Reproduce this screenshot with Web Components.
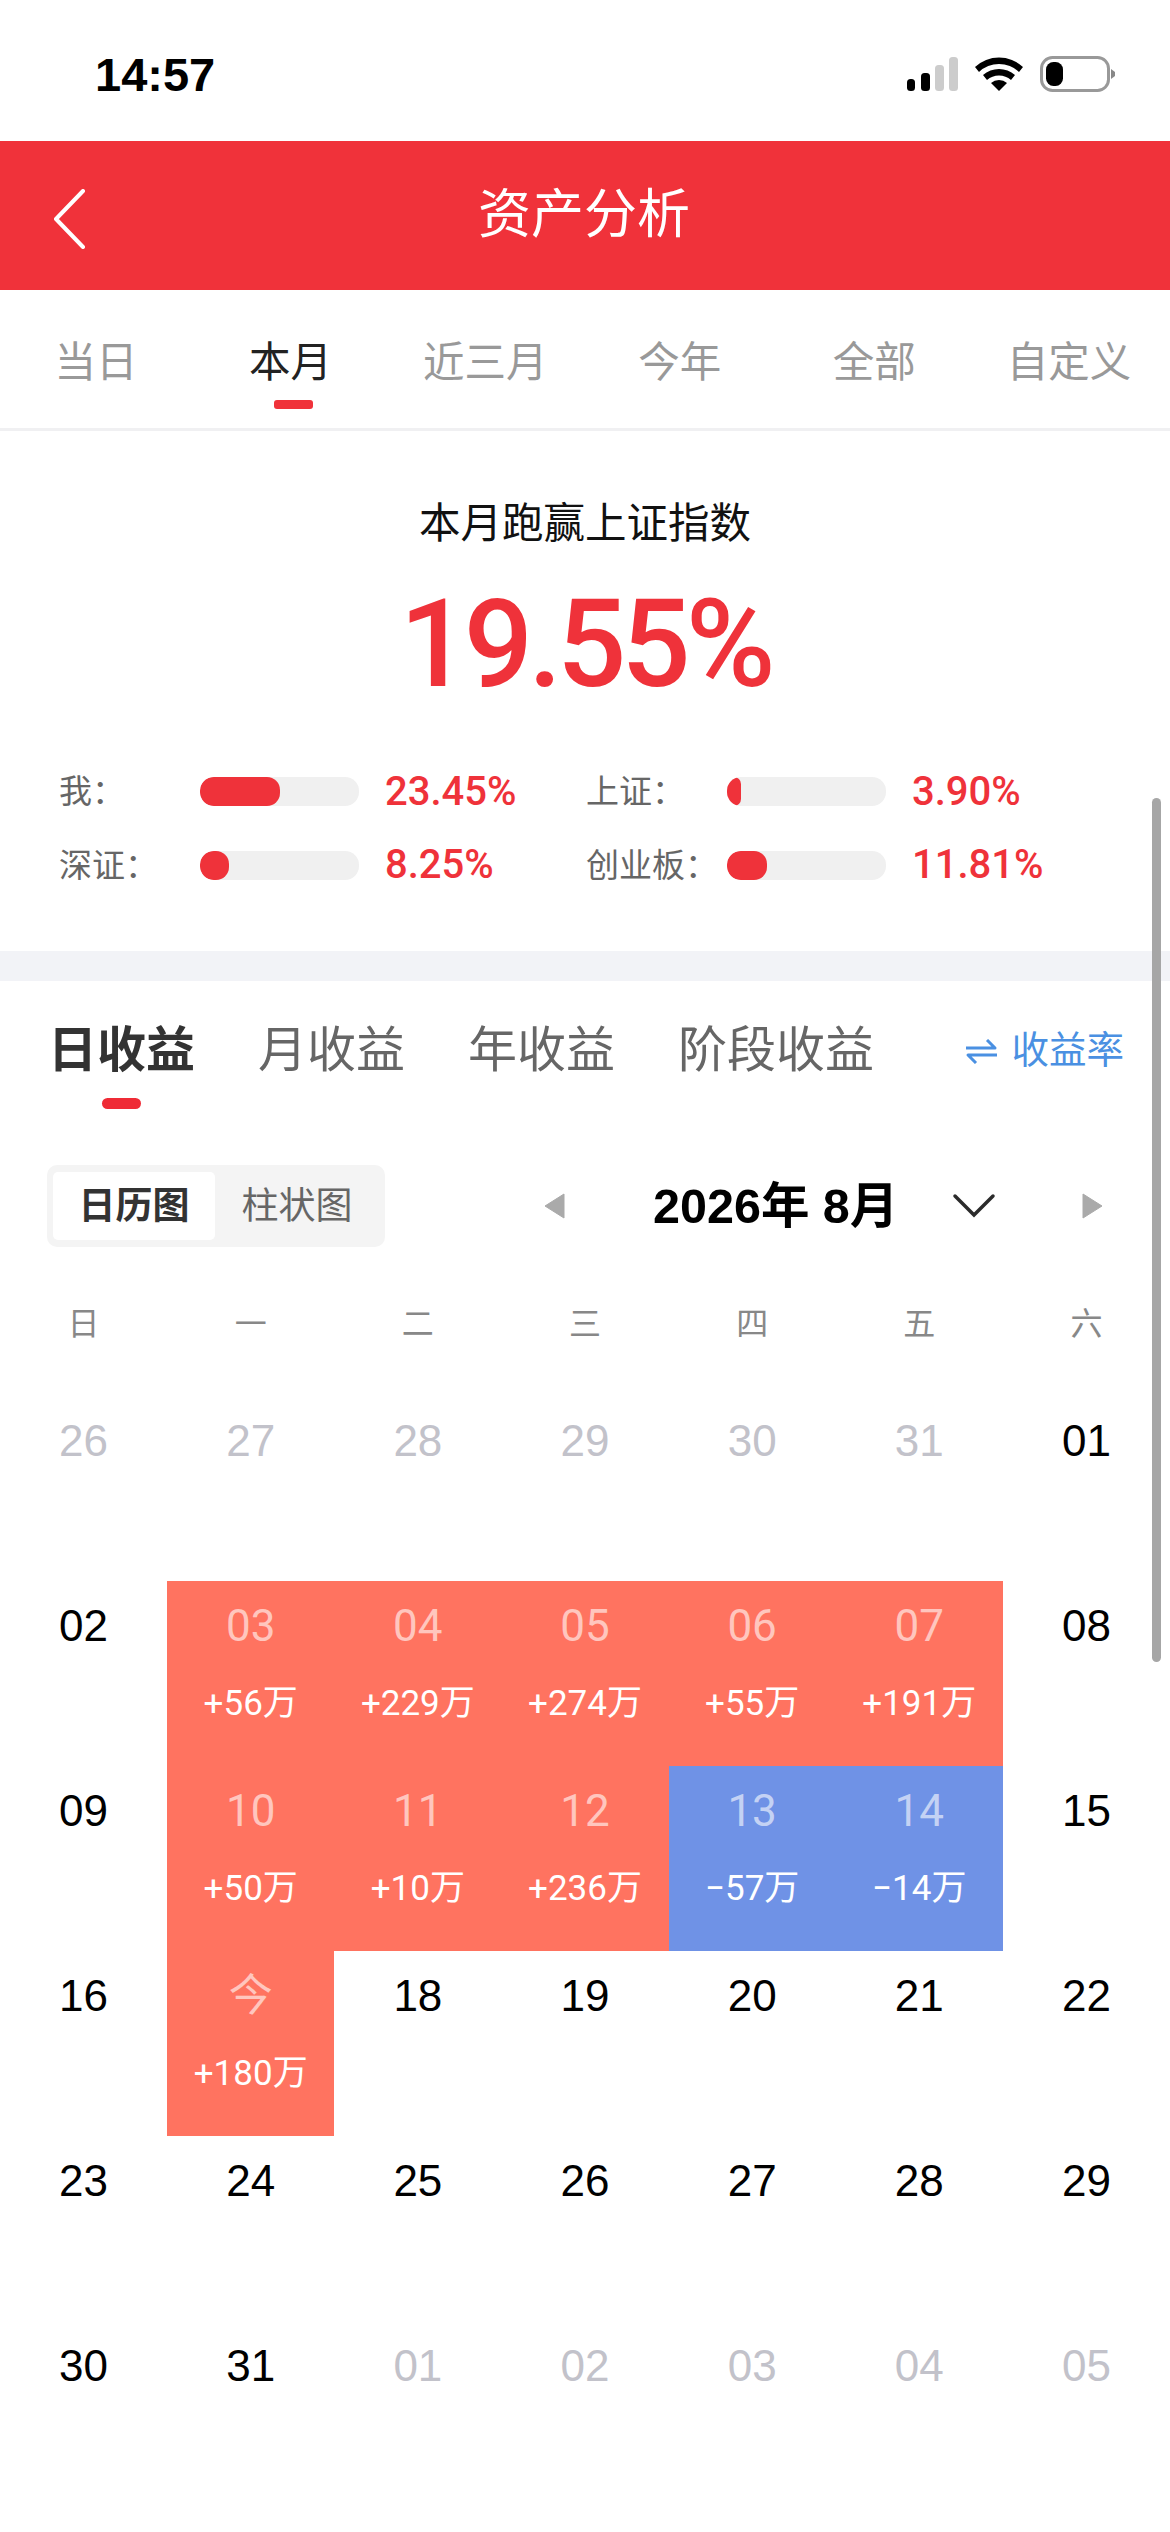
<!DOCTYPE html>
<html lang="zh-CN">
<head>
<meta charset="utf-8">
<title>资产分析</title>
<style>
  html, body { margin: 0; padding: 0; background: #fff; }
  body {
    position: relative;
    width: 1170px;
    height: 2532px;
    overflow: hidden;
    font-family: Roboto, "Noto Sans CJK SC", sans-serif;
  }
</style>
</head>
<body>
<app-status-bar time="14:57"></app-status-bar>
<nav-header>资产分析</nav-header>
<period-tabs items="当日,本月,近三月,今年,全部,自定义" active="1"></period-tabs>
<beat-summary title-text="本月跑赢上证指数" value="19.55%">
  <index-meter label="我：" fill="80" value="23.45%"></index-meter>
  <index-meter label="上证：" fill="14" value="3.90%"></index-meter>
  <index-meter label="深证：" fill="29" value="8.25%"></index-meter>
  <index-meter label="创业板：" fill="40" value="11.81%"></index-meter>
</beat-summary>
<section-gap></section-gap>
<earning-tabs items="日收益,月收益,年收益,阶段收益" active="0" switch-label="收益率"></earning-tabs>
<calendar-toolbar month="2026年 8月"></calendar-toolbar>
<earnings-calendar>
  <calendar-day day="26" muted></calendar-day>
  <calendar-day day="27" muted></calendar-day>
  <calendar-day day="28" muted></calendar-day>
  <calendar-day day="29" muted></calendar-day>
  <calendar-day day="30" muted></calendar-day>
  <calendar-day day="31" muted></calendar-day>
  <calendar-day day="01"></calendar-day>
  <calendar-day day="02"></calendar-day>
  <calendar-day day="03" kind="gain" amount="+56万"></calendar-day>
  <calendar-day day="04" kind="gain" amount="+229万"></calendar-day>
  <calendar-day day="05" kind="gain" amount="+274万"></calendar-day>
  <calendar-day day="06" kind="gain" amount="+55万"></calendar-day>
  <calendar-day day="07" kind="gain" amount="+191万"></calendar-day>
  <calendar-day day="08"></calendar-day>
  <calendar-day day="09"></calendar-day>
  <calendar-day day="10" kind="gain" amount="+50万"></calendar-day>
  <calendar-day day="11" kind="gain" amount="+10万"></calendar-day>
  <calendar-day day="12" kind="gain" amount="+236万"></calendar-day>
  <calendar-day day="13" kind="loss" amount="−57万"></calendar-day>
  <calendar-day day="14" kind="loss" amount="−14万"></calendar-day>
  <calendar-day day="15"></calendar-day>
  <calendar-day day="16"></calendar-day>
  <calendar-day day="今" kind="gain" amount="+180万"></calendar-day>
  <calendar-day day="18"></calendar-day>
  <calendar-day day="19"></calendar-day>
  <calendar-day day="20"></calendar-day>
  <calendar-day day="21"></calendar-day>
  <calendar-day day="22"></calendar-day>
  <calendar-day day="23"></calendar-day>
  <calendar-day day="24"></calendar-day>
  <calendar-day day="25"></calendar-day>
  <calendar-day day="26"></calendar-day>
  <calendar-day day="27"></calendar-day>
  <calendar-day day="28"></calendar-day>
  <calendar-day day="29"></calendar-day>
  <calendar-day day="30"></calendar-day>
  <calendar-day day="31"></calendar-day>
  <calendar-day day="01" muted></calendar-day>
  <calendar-day day="02" muted></calendar-day>
  <calendar-day day="03" muted></calendar-day>
  <calendar-day day="04" muted></calendar-day>
  <calendar-day day="05" muted></calendar-day>
</earnings-calendar>
<scroll-thumb></scroll-thumb>

<script>
(() => {
  const CJK = 'Roboto, "Noto Sans CJK SC", sans-serif';
  const HELV = '"Liberation Sans", "Noto Sans CJK SC", sans-serif';

  /** Small helper: every element here is just a shadow root with fixed markup. */
  const mount = (el, html) => {
    el.attachShadow({ mode: 'open' }).innerHTML = html;
  };

  class AppStatusBar extends HTMLElement {
    connectedCallback() {
      mount(this, `
        <style>
          :host { display: flex; align-items: center; justify-content: space-between; height: 141px; padding: 0 53px 0 95px; box-sizing: border-box; background: #fff; }
          .time { font: 700 47px/1 "Liberation Sans", sans-serif; color: #000; margin-top: 7px; }
          svg { display: block; margin-top: 7px; }
        </style>
        <span class="time">${this.getAttribute('time')}</span>
        <svg width="210" height="40" viewBox="907 54 210 40">
          <rect x="907" y="79" width="8" height="12" rx="3.5" fill="#000"/>
          <rect x="921" y="73" width="9" height="18" rx="3.5" fill="#000"/>
          <rect x="935" y="65" width="9" height="26" rx="3.5" fill="#ccc"/>
          <rect x="949" y="57" width="9" height="34" rx="3.5" fill="#ccc"/>
          <path d="M975 67 A35 35 0 0 1 1023 67 L1019 72 A29 29 0 0 0 979 72 Z" fill="#000"/>
          <path d="M983 75 A24 24 0 0 1 1015 75 L1011 80 A18 18 0 0 0 987 80 Z" fill="#000"/>
          <path d="M991 83 A12 12 0 0 1 1007 83 L999 91 Z" fill="#000"/>
          <rect x="1041.5" y="57.5" width="67" height="33" rx="11" fill="none" stroke="#999" stroke-width="3"/>
          <rect x="1046" y="62" width="17" height="24" rx="7.5" fill="#000"/>
          <path d="M1111 69 L1115 72 V76 L1111 79 Z" fill="#888"/>
        </svg>`);
    }
  }

  class NavHeader extends HTMLElement {
    connectedCallback() {
      mount(this, `
        <style>
          :host { display: flex; align-items: center; justify-content: center; position: relative; height: 149px; background: #f0323a; color: #fff; font: 400 53px/1 ${CJK}; }
          .title { margin-top: -1px; margin-left: -2px; }
          svg { position: absolute; left: 52px; top: 48px; }
        </style>
        <svg width="34" height="60" viewBox="0 0 34 60"><path d="M31 2 L4 30 L31 58" fill="none" stroke="#fff" stroke-width="4" stroke-linecap="round" stroke-linejoin="round"/></svg>
        <span class="title"><slot></slot></span>`);
    }
  }

  class PeriodTabs extends HTMLElement {
    connectedCallback() {
      const active = Number(this.getAttribute('active'));
      const tabs = this.getAttribute('items').split(',').map((label, i) => `
        <div class="tab ${i === active ? 'on' : ''}"><span>${label}</span><i></i></div>`).join('');
      mount(this, `
        <style>
          :host { display: block; height: 141px; box-sizing: border-box; border-bottom: 3px solid #f0f0f2; background: #fff; overflow: hidden; }
          .row { display: grid; grid-template-columns: repeat(6, 194.6px); margin-left: -1.3px; padding-top: 45px; }
          .tab { display: flex; flex-direction: column; align-items: center; gap: 9px; font: 400 41.5px/56px ${CJK}; color: #999; }
          .tab.on { color: #222; }
          i { display: block; width: 39px; height: 9px; border-radius: 3px; margin-left: 6px; }
          .on i { background: #f0323a; }
        </style>
        <div class="row">${tabs}</div>`);
    }
  }

  class BeatSummary extends HTMLElement {
    connectedCallback() {
      mount(this, `
        <style>
          :host { display: block; height: 520px; box-sizing: border-box; padding-top: 63px; background: #fff; }
          h2 { margin: 0; font: 400 41.5px/60px ${CJK}; color: #111; text-align: center; }
          .big { margin-top: 29px; font: 500 122px/124px Roboto, sans-serif; letter-spacing: -5px; color: #ef323a; text-align: center; }
          .grid { display: grid; grid-template-columns: 527px 527px; grid-auto-rows: 73.5px; padding: 0 0 0 59px; margin-top: 48px; }
        </style>
        <h2>${this.getAttribute('title-text')}</h2>
        <div class="big">${this.getAttribute('value')}</div>
        <div class="grid"><slot></slot></div>`);
    }
  }

  class IndexMeter extends HTMLElement {
    connectedCallback() {
      mount(this, `
        <style>
          :host { display: flex; align-items: center; height: 73.5px; }
          .label { width: 141px; font: 400 33px/1 ${CJK}; color: #666; white-space: nowrap; }
          .track { width: 159px; height: 29px; border-radius: 14px; background: #f0f0f0; overflow: hidden; }
          .fill { height: 100%; background: #ef323a; border-radius: 13px; }
          .value { margin-left: 26px; font: 500 40px/1 Roboto, sans-serif; color: #ef323a; }
        </style>
        <span class="label">${this.getAttribute('label')}</span>
        <div class="track"><div class="fill" style="width:${this.getAttribute('fill')}px"></div></div>
        <span class="value">${this.getAttribute('value')}</span>`);
    }
  }

  class SectionGap extends HTMLElement {
    connectedCallback() {
      mount(this, `<style>:host { display: block; height: 30px; background: #f2f3f7; }</style>`);
    }
  }

  class EarningTabs extends HTMLElement {
    connectedCallback() {
      const active = Number(this.getAttribute('active'));
      const tabs = this.getAttribute('items').split(',').map((label, i) => `
        <div class="tab ${i === active ? 'on' : ''}"><span>${label}</span><i></i></div>`).join('');
      mount(this, `
        <style>
          :host { display: flex; justify-content: space-between; height: 184px; box-sizing: border-box; padding: 36px 46px 0 48px; background: #fff; }
          .tabs { display: flex; gap: 63px; }
          .tab { display: flex; flex-direction: column; align-items: center; gap: 13px; font: 400 49px/68px ${CJK}; color: #666; }
          .tab.on { color: #333; font-weight: 700; }
          i { display: block; width: 39px; height: 11px; border-radius: 6px; }
          .on i { background: #ef2b36; }
          .switch { display: flex; align-items: center; gap: 15px; height: 68px; font: 400 37.5px/1 ${CJK}; color: #4a90e2; }
          svg { display: block; }
        </style>
        <div class="tabs">${tabs}</div>
        <div class="switch">
          <svg width="31" height="25" viewBox="0 0 31 25"><path d="M0 9 H29 L21 1 M31 16 H2 L10 24" fill="none" stroke="#4a90e2" stroke-width="3" stroke-linejoin="round"/></svg>
          <span>${this.getAttribute('switch-label')}</span>
        </div>`);
    }
  }

  class CalendarToolbar extends HTMLElement {
    connectedCallback() {
      mount(this, `
        <style>
          :host { display: flex; align-items: center; height: 82px; padding-left: 47px; background: #fff; }
          .seg { display: flex; width: 338px; height: 82px; box-sizing: border-box; padding: 7px 6px; border-radius: 10px; background: #f4f4f4; font: 400 37px/69px ${CJK}; }
          .seg span { width: 162px; text-align: center; color: #666; }
          .seg span + span { flex: 1; }
          .seg .on { background: #fff; border-radius: 5px; color: #333; font-weight: 700; }
          .nav { display: flex; align-items: center; margin-left: 159px; }
          .month { margin-left: 88px; width: 299px; font: 700 48.5px/1 ${HELV}; color: #000; white-space: nowrap; }
          svg { display: block; flex: none; }
        </style>
        <div class="seg"><span class="on">日历图</span><span>柱状图</span></div>
        <div class="nav">
          <svg width="21" height="26" viewBox="0 0 21 26"><path d="M20 1 V25 L1 13 Z" fill="#aaa" stroke="#aaa" stroke-linejoin="round"/></svg>
          <span class="month">${this.getAttribute('month')}</span>
          <svg width="44" height="26" viewBox="0 0 44 26"><path d="M3 3 L22 22 L41 3" fill="none" stroke="#2b2b2b" stroke-width="3.5" stroke-linecap="round"/></svg>
          <svg width="21" height="26" viewBox="0 0 21 26" style="margin-left:86px"><path d="M1 1 V25 L20 13 Z" fill="#aaa" stroke="#aaa" stroke-linejoin="round"/></svg>
        </div>`);
    }
  }

  class EarningsCalendar extends HTMLElement {
    connectedCallback() {
      const heads = '日一二三四五六'.split('').map((d) => `<span>${d}</span>`).join('');
      mount(this, `
        <style>
          :host { display: block; background: #fff; padding-top: 49px; }
          .week { display: grid; grid-template-columns: repeat(7, 1fr); height: 100px; font: 400 32px/56px ${CJK}; color: #888; text-align: center; }
          .days { display: grid; grid-template-columns: repeat(7, 1fr); grid-auto-rows: 185px; }
        </style>
        <div class="week">${heads}</div>
        <div class="days"><slot></slot></div>`);
    }
  }

  class CalendarDay extends HTMLElement {
    connectedCallback() {
      const amount = this.getAttribute('amount');
      mount(this, `
        <style>
          :host { display: flex; flex-direction: column; align-items: center; padding-top: 14px; box-sizing: border-box; color: #000; }
          :host([kind="gain"]) { background: #ff7360; }
          :host([kind="loss"]) { background: #6f92e6; }
          :host([muted]) { color: #c2c2ca; }
          .day { font: 400 44px/62px ${HELV}; }
          :host([kind]) .day { font-family: ${CJK}; color: rgba(255, 255, 255, 0.6); }
          .amount { margin-top: 24px; font: 400 35px/46px ${CJK}; color: #fff; white-space: nowrap; }
        </style>
        <span class="day">${this.getAttribute('day')}</span>
        ${amount ? `<span class="amount">${amount}</span>` : ''}`);
    }
  }

  class ScrollThumb extends HTMLElement {
    connectedCallback() {
      mount(this, `<style>:host { position: absolute; left: 1152px; top: 798px; width: 9px; height: 864px; background: #a6a6a6; border-radius: 5px; }</style>`);
    }
  }

  customElements.define('app-status-bar', AppStatusBar);
  customElements.define('nav-header', NavHeader);
  customElements.define('period-tabs', PeriodTabs);
  customElements.define('beat-summary', BeatSummary);
  customElements.define('index-meter', IndexMeter);
  customElements.define('section-gap', SectionGap);
  customElements.define('earning-tabs', EarningTabs);
  customElements.define('calendar-toolbar', CalendarToolbar);
  customElements.define('earnings-calendar', EarningsCalendar);
  customElements.define('calendar-day', CalendarDay);
  customElements.define('scroll-thumb', ScrollThumb);
})();
</script>
</body>
</html>
